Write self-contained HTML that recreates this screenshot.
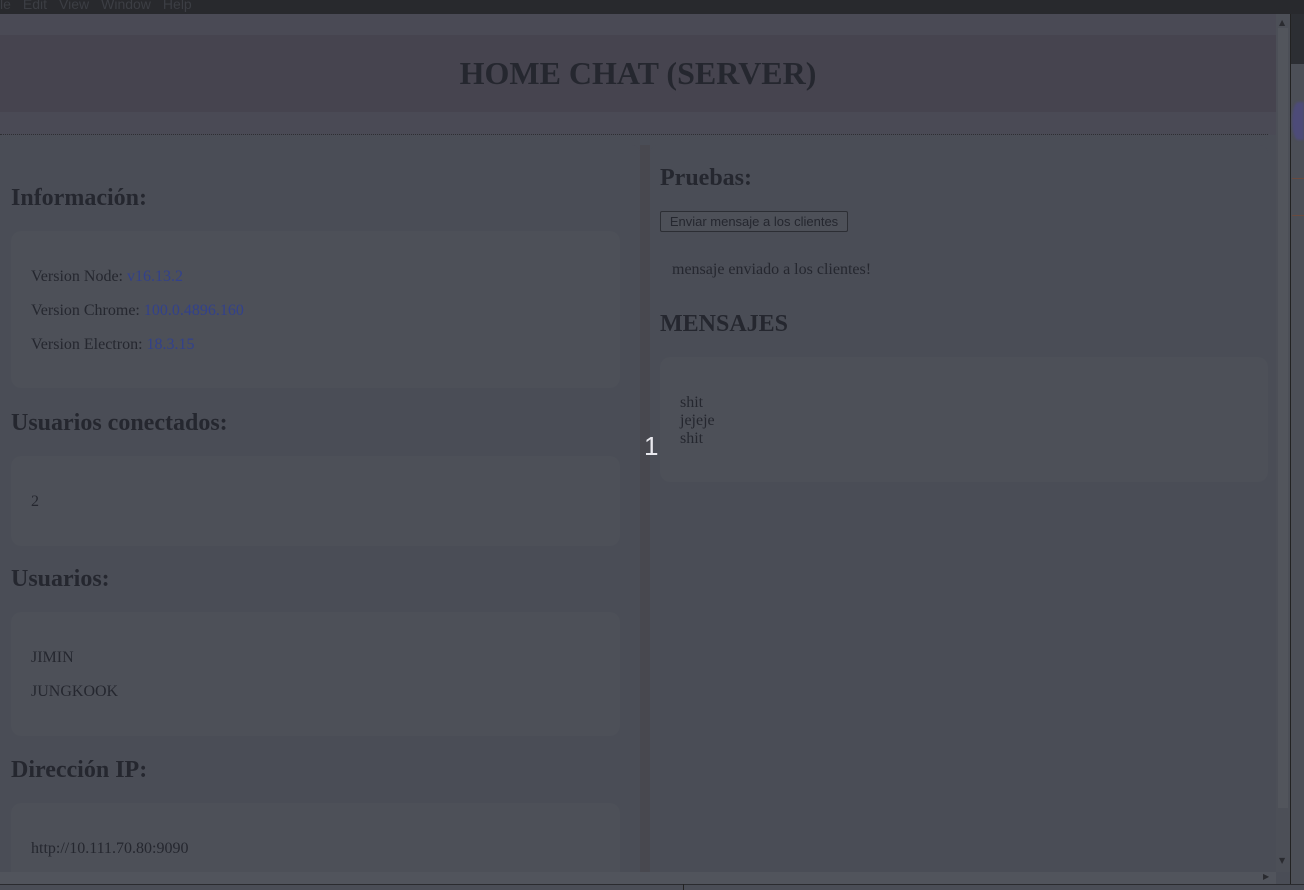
<!DOCTYPE html>
<html><head><meta charset="utf-8"><style>
*{margin:0;padding:0;box-sizing:border-box}
body{width:1304px;height:890px;overflow:hidden;background:#4a4d56;font-family:"Liberation Serif",serif;color:#25272f;position:relative}
.a{position:absolute}
.menu{left:0;top:0;width:1304px;height:14px;background:#28292d;font-family:"Liberation Sans",sans-serif;font-size:14px;color:#3c3e44;line-height:8px;white-space:nowrap;overflow:hidden;padding-left:0}
.menu span{margin-right:12px}
.hdr{left:0;top:35px;width:1276px;height:77px;background:#46444f}
.top2{left:0;top:14px;width:1276px;height:21px;background:#4a4a55}
.band{left:0;top:112px;width:1276px;height:23px;background:#4a4a55}
.line{left:0;top:134px;width:1268px;height:1px;border-top:1px dotted #2e2f33}
h1{position:absolute;left:0;width:1276px;top:54px;text-align:center;font-size:32px;font-weight:bold;line-height:38px}
h2{position:absolute;font-size:24px;font-weight:bold;line-height:28px}
.card{position:absolute;background:#4d5058;border-radius:10px}
.t{position:absolute;font-size:16px;line-height:18px;white-space:nowrap}
.b{color:#32418c}
.gap{left:640px;top:145px;width:10px;height:727px;background:#48484f}
.rpanel{left:650px;top:145px;width:618px;height:727px;background:#4a4d56;border-radius:8px 8px 0 0}
.lpanel{left:0;top:145px;width:640px;height:727px;background:#4a4d56;border-radius:0 8px 0 0}
.vs{left:1276px;top:14px;width:14px;height:858px;background:#4c4f57}
.vth{left:1278px;top:28px;width:10px;height:780px;background:#52555c}
.right{left:1290px;top:14px;width:14px;height:876px;background:#4c4f57;border-left:1px solid #222}
.hs{left:0;top:872px;width:1276px;height:12px;background:#51545c}
.bot{left:0;top:884px;width:1304px;height:6px;background:#4a4d56;border-top:1px solid #2a2b2f}
button{position:absolute;left:660px;top:211px;width:188px;height:21px;font-family:"Liberation Sans",sans-serif;font-size:13px;color:#25272f;background:#4d5058;border:1px solid #2c2e34;border-radius:2px}
</style></head><body>
<div class="a menu"><span>le</span><span>Edit</span><span>View</span><span>Window</span><span>Help</span></div>
<div class="a top2"></div>
<div class="a hdr"></div>
<div class="a band"></div>
<div class="a line"></div>
<h1>HOME CHAT (SERVER)</h1>
<div class="a lpanel"></div>
<div class="a gap"></div>
<div class="a rpanel"></div>

<h2 style="left:11px;top:184px">Información:</h2>
<div class="card" style="left:11px;top:231px;width:609px;height:157px"></div>
<div class="t" style="left:31px;top:268px">Version Node: <span class="b">v16.13.2</span></div>
<div class="t" style="left:31px;top:302px">Version Chrome: <span class="b">100.0.4896.160</span></div>
<div class="t" style="left:31px;top:336px">Version Electron: <span class="b">18.3.15</span></div>

<h2 style="left:11px;top:409px">Usuarios conectados:</h2>
<div class="card" style="left:11px;top:456px;width:609px;height:90px"></div>
<div class="t" style="left:31px;top:493px">2</div>

<h2 style="left:11px;top:565px">Usuarios:</h2>
<div class="card" style="left:11px;top:612px;width:609px;height:124px"></div>
<div class="t" style="left:31px;top:649px">JIMIN</div>
<div class="t" style="left:31px;top:683px">JUNGKOOK</div>

<h2 style="left:11px;top:756px">Dirección IP:</h2>
<div class="card" style="left:11px;top:803px;width:609px;height:80px"></div>
<div class="t" style="left:31px;top:840px">http://10.111.70.80:9090</div>

<h2 style="left:660px;top:164px">Pruebas:</h2>
<button>Enviar mensaje a los clientes</button>
<div class="t" style="left:672px;top:261px">mensaje enviado a los clientes!</div>
<h2 style="left:660px;top:310px">MENSAJES</h2>
<div class="card" style="left:660px;top:357px;width:608px;height:125px"></div>
<div class="t" style="left:680px;top:394px">shit</div>
<div class="t" style="left:680px;top:412px">jejeje</div>
<div class="t" style="left:680px;top:430px">shit</div>
<div class="t" style="left:644px;top:432px;font-family:'Liberation Sans',sans-serif;font-size:26px;line-height:28px;color:#e8e8ee">1</div>

<div class="a vs"></div>
<div class="a vth"></div>
<div class="a" style="left:1279px;top:18px;font-size:8px;color:#2a2b30;font-family:'DejaVu Sans',sans-serif">▲</div>
<div class="a" style="left:1279px;top:856px;font-size:8px;color:#2a2b30;font-family:'DejaVu Sans',sans-serif">▼</div>
<div class="a right"></div>
<div class="a" style="left:1291px;top:14px;width:13px;height:50px;background:#2c2e33"></div>
<div class="a" style="left:1292px;top:102px;width:12px;height:38px;border-radius:50% 0 0 50%;background:#4d4b78;filter:blur(1px)"></div>
<div class="a" style="left:1292px;top:178px;width:12px;height:1px;background:#6a4a3e"></div>
<div class="a" style="left:1292px;top:215px;width:12px;height:1px;background:#6a4a3e"></div>
<div class="a hs"></div>
<div class="a" style="left:1263px;top:872px;font-size:8px;color:#2a2b30;font-family:'DejaVu Sans',sans-serif">▶</div>
<div class="a bot"></div>
<div class="a" style="left:683px;top:884px;width:1px;height:6px;background:#222"></div>
</body></html>
